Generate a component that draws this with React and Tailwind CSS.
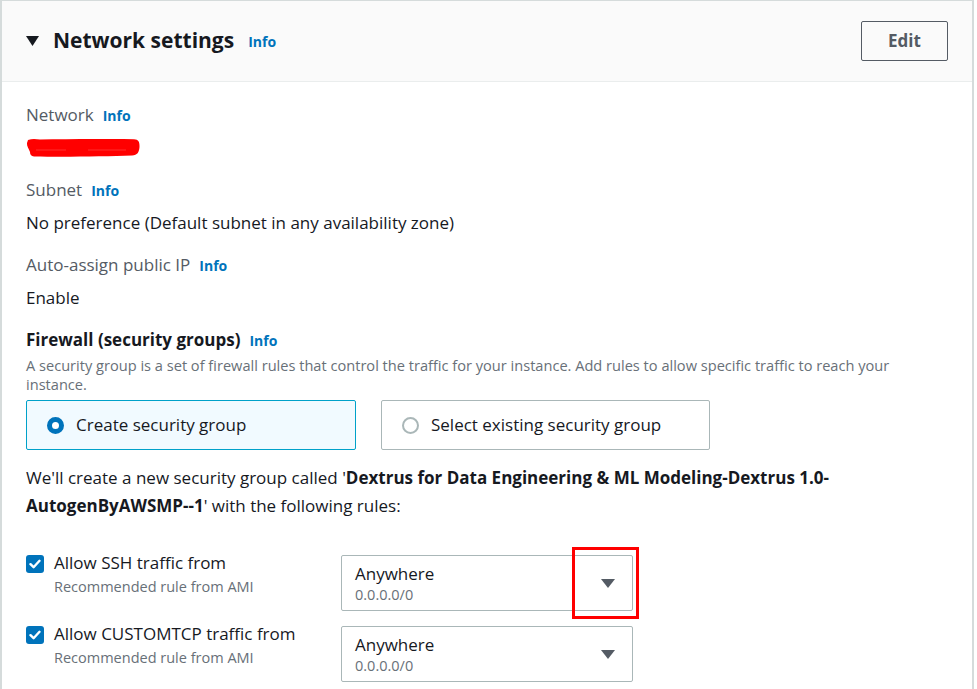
const font = { fontFamily: '"Open Sans", "Noto Sans", sans-serif' };

function Info({ className = "" }) {
  return <span className={"text-[14px] font-bold text-[#0073bb] " + className}>Info</span>;
}

function Label({ children }) {
  return (
    <div className="flex items-baseline gap-[9px] text-[17px] leading-[24px] text-[#545b64]">
      <span>{children}</span>
      <Info />
    </div>
  );
}

function Check() {
  return (
    <div className="w-[18px] h-[18px] rounded-[3px] bg-[#0073bb] flex items-center justify-center shrink-0">
      <svg width="12" height="10" viewBox="0 0 12 10">
        <path d="M1.5 5.2 L4.6 8.2 L10.5 1.8" fill="none" stroke="white" strokeWidth="2.4" strokeLinecap="round" strokeLinejoin="round" />
      </svg>
    </div>
  );
}

function Caret() {
  return (
    <svg width="14" height="9" viewBox="0 0 14 9">
      <path d="M0 0 H14 L7 9 Z" fill="#545b64" />
    </svg>
  );
}

function RuleRow({ label }) {
  return (
    <div className="flex items-start">
      <div className="w-[315px] flex items-start gap-[10px]">
        <Check />
        <div className="-mt-[2px]">
          <div className="text-[17px] leading-[20px] text-[#16191f]">{label}</div>
          <div className="mt-[4px] text-[14.5px] leading-[20px] text-[#687078]">Recommended rule from AMI</div>
        </div>
      </div>
      <div className="w-[292px] h-[56px] border border-[#aab7b8] rounded-[2px] flex items-center pl-[13px] pr-[17px]">
        <div className="flex-1 pt-[1px]">
          <div className="text-[17px] leading-[22px] text-[#16191f]">Anywhere</div>
          <div className="text-[14.5px] leading-[20px] text-[#687078]">0.0.0.0/0</div>
        </div>
        <Caret />
      </div>
    </div>
  );
}

export default function App() {
  return (
    <div style={font} className="relative w-[977px] h-[689px] bg-white overflow-hidden">
      <div className="w-[974px] min-h-[700px] border-l-2 border-r-2 border-t border-[#d5dbdb]">
        {/* Header */}
        <div className="h-[81px] bg-[#fafafa] border-b border-[#eaeded] flex items-center pl-[24px] pr-[24px]">
          <svg width="13" height="10" viewBox="0 0 13 10" className="mr-[14px]">
            <path d="M0 0 H13 L6.5 10 Z" fill="#16191f" />
          </svg>
          <span className="text-[21px] font-bold text-[#16191f] leading-[28px] -mt-[2px]">Network settings</span>
          <Info className="ml-[14px] mt-[1px]" />
          <div className="flex-1" />
          <div className="w-[87px] h-[40px] border border-[#545b64] rounded-[2px] flex items-center justify-center text-[17px] font-bold text-[#545b64]">
            Edit
          </div>
        </div>

        {/* Body */}
        <div className="pl-[24px] pr-[24px] pt-[21px]">
          <div className="flex flex-col gap-[18px]">
            <div>
              <Label>Network</Label>
              <div className="mt-[8px] h-[24px] flex items-center">
                <svg width="114" height="20" viewBox="0 0 114 20">
                  <path
                    d="M2 2 C6 0.5 10 1 14 1.5 C40 1 70 0.8 108 1.2 C112.5 1.3 113.8 4 113.5 9 C113 14.5 111.5 17 106 17.5 C80 18.5 40 19 8 18.5 C5 18.3 4 16.5 4 14 C3 11 0.5 8 1 5 Z"
                    fill="#ff0000"
                  />
                  <path d="M10 12 H40 M62 12 H100" stroke="#ff7070" strokeWidth="0.7" opacity="0.6" />
                </svg>
              </div>
            </div>
            <div>
              <Label>Subnet</Label>
              <div className="mt-[8px] text-[17px] leading-[24px] text-[#16191f]">
                No preference (Default subnet in any availability zone)
              </div>
            </div>
            <div>
              <Label>Auto-assign public IP</Label>
              <div className="mt-[8px] text-[17px] leading-[24px] text-[#16191f]">Enable</div>
            </div>
            <div>
              <div className="flex items-baseline gap-[9px] text-[17px] leading-[24px] font-bold text-[#16191f]">
                <span>Firewall (security groups)</span>
                <Info />
              </div>
              <div className="mt-[3px] text-[14.6px] leading-[19px] text-[#687078]">
                A security group is a set of firewall rules that control the traffic for your instance. Add rules to allow specific traffic to reach your instance.
              </div>
              <div className="mt-[6px] flex gap-[25px]">
                <div className="w-[330px] h-[50px] border border-[#00a1c9] bg-[#f1faff] rounded-[2px] flex items-center pl-[20px]">
                  <div className="w-[17px] h-[17px] rounded-full border-[5px] border-[#0073bb] bg-white shrink-0" />
                  <span className="ml-[12px] text-[17px] text-[#16191f]">Create security group</span>
                </div>
                <div className="w-[329px] h-[50px] border border-[#aab7b8] bg-white rounded-[2px] flex items-center pl-[20px]">
                  <div className="w-[17px] h-[17px] rounded-full border-2 border-[#aab7b8] bg-white shrink-0" />
                  <span className="ml-[12px] text-[17px] text-[#16191f]">Select existing security group</span>
                </div>
              </div>
              <div className="mt-[14px] text-[17px] leading-[28px] text-[#16191f]">
                We'll create a new security group called '<b>Dextrus for Data Engineering &amp; ML Modeling-Dextrus 1.0-AutogenByAWSMP--1</b>' with the following rules:
              </div>
              <div className="mt-[35px] flex flex-col gap-[15px]">
                <RuleRow label="Allow SSH traffic from" />
                <RuleRow label="Allow CUSTOMTCP traffic from" />
              </div>
            </div>
          </div>
        </div>
      </div>

      {/* red annotation box */}
      <div className="absolute left-[572px] top-[547px] w-[67px] h-[72px] border-[3px] border-[#ff0000]" />
    </div>
  );
}
